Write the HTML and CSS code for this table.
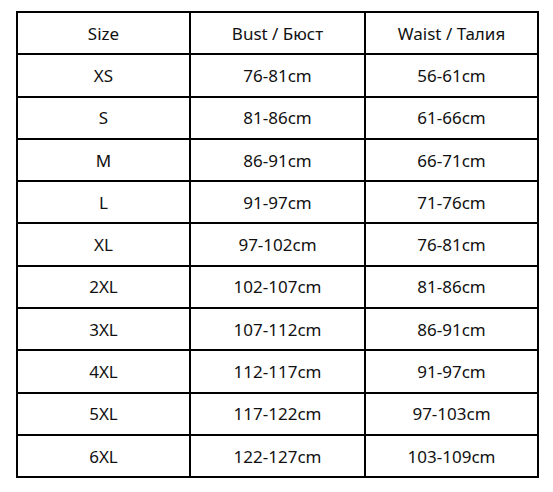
FILE: index.html
```html
<!DOCTYPE html>
<html>
<head>
<meta charset="utf-8">
<link rel="stylesheet" href="styles.css">
</head>
<body>
<div class="page">
<table class="size-table">
<tr><td>Size</td><td>Bust / Бюст</td><td>Waist / Талия</td></tr>
<tr><td>XS</td><td>76-81cm</td><td>56-61cm</td></tr>
<tr><td>S</td><td>81-86cm</td><td>61-66cm</td></tr>
<tr><td>M</td><td>86-91cm</td><td>66-71cm</td></tr>
<tr><td>L</td><td>91-97cm</td><td>71-76cm</td></tr>
<tr><td>XL</td><td>97-102cm</td><td>76-81cm</td></tr>
<tr><td>2XL</td><td>102-107cm</td><td>81-86cm</td></tr>
<tr><td>3XL</td><td>107-112cm</td><td>86-91cm</td></tr>
<tr><td>4XL</td><td>112-117cm</td><td>91-97cm</td></tr>
<tr><td>5XL</td><td>117-122cm</td><td>97-103cm</td></tr>
<tr><td>6XL</td><td>122-127cm</td><td>103-109cm</td></tr>
</table>
</div>
</body>
</html>
```
FILE: styles.css
```css
html, body {
  margin: 0;
  padding: 0;
  background: #fff;
}
.page {
  padding: 11px 0 0 16px;
}
.size-table {
  border-collapse: collapse;
  table-layout: fixed;
  width: 516px;
  font-family: "Noto Sans", "Open Sans", sans-serif;
  font-size: 17px;
  color: #111;
}
.size-table td {
  border: 2px solid #000;
  text-align: center;
  vertical-align: middle;
  height: 40.3px;
  padding: 0;
}
.size-table td:nth-child(1) { width: 171px; }
.size-table td:nth-child(2) { width: 173px; }
.size-table td:nth-child(3) { width: 171px; }
```
